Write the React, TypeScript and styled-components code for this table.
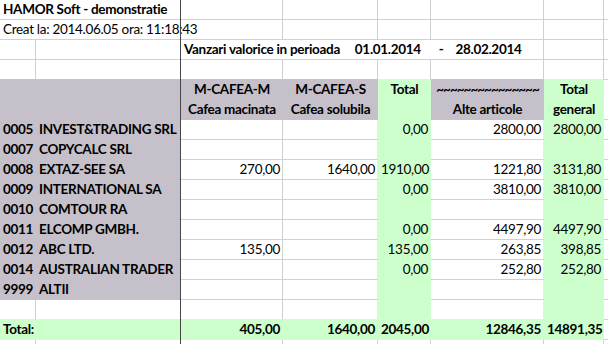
import React from "react";
import styled, { createGlobalStyle } from "styled-components";

const GRID = "#d0d0d0";
const GREEN = "#ccffcc";
const GRAY = "#c5c0c9";
const FREEZE = "#464646";

type Fill = "w" | "g" | "y";
type Align = "left" | "right" | "center";

interface CellDef {
  fill: Fill;
  span?: number;
  text?: string | string[];
  align?: Align;
  bold?: boolean;
}

interface RowDef {
  h: number;
  cells: CellDef[];
}

const fillColor = (f: Fill) => (f === "g" ? GREEN : f === "y" ? GRAY : "#ffffff");

const GlobalStyle = createGlobalStyle`
  html, body {
    margin: 0;
    padding: 0;
    background: #ffffff;
  }
  body {
    font-family: Lato, "Liberation Sans", sans-serif;
    font-size: 13.5px;
    letter-spacing: -0.3px;
    color: #000000;
  }
`;

const Sheet = styled.div`
  position: relative;
  width: 608px;
  height: 344px;
  overflow: hidden;
  display: grid;
  grid-template-columns: 36px 145px 102px 95px 53px 113px 60px 1fr;
  grid-auto-rows: auto;
`;

const FreezeLine = styled.div`
  position: absolute;
  left: 180px;
  top: 0;
  bottom: 0;
  width: 1px;
  background: ${FREEZE};
`;

const Cell = styled.div<{
  $bg: string;
  $right: string;
  $bottom: string;
  $span: number;
  $h: number;
  $align: Align;
  $bold: boolean;
}>`
  grid-column: span ${({ $span }) => $span};
  height: ${({ $h }) => $h - 1}px;
  background: ${({ $bg }) => $bg};
  border-right: 1px solid ${({ $right }) => $right};
  border-bottom: 1px solid ${({ $bottom }) => $bottom};
  padding: 0 2px 0 3px;
  text-align: ${({ $align }) => $align};
  font-weight: ${({ $bold }) => ($bold ? 700 : 400)};
  line-height: 19px;
  white-space: nowrap;
  overflow: hidden;
`;

const HeadLine = styled.div<{ $tilde?: boolean }>`
  height: 19.5px;
  line-height: 19.5px;
  letter-spacing: ${({ $tilde }) => ($tilde ? "-1px" : "-0.3px")};
`;

const w = (text?: string, align: Align = "right", bold = false): CellDef => ({ fill: "w", text, align, bold });
const g = (text?: string, align: Align = "right", bold = false): CellDef => ({ fill: "g", text, align, bold });

const dataRow = (code: string, name: string, c?: string, d?: string, e?: string, f?: string, gen?: string): RowDef => ({
  h: 20,
  cells: [
    { fill: "y", text: code, align: "left", bold: true },
    { fill: "y", text: name, align: "left", bold: true },
    w(c),
    w(d),
    g(e),
    w(f),
    g(gen),
    w(),
  ],
});

const blank = (): RowDef => ({ h: 20, cells: [w(), w(), w(), w(), w(), w(), w(), w()] });

const rows: RowDef[] = [
  {
    h: 20,
    cells: [{ fill: "w", span: 2, text: "HAMOR Soft - demonstratie", align: "left", bold: true }, w(), w(), w(), w(), w(), w()],
  },
  {
    h: 20,
    cells: [{ fill: "w", span: 3, text: "Creat la: 2014.06.05 ora: 11:18:43", align: "left" }, w(), w(), w(), w(), w()],
  },
  {
    h: 20,
    cells: [
      w(),
      w(),
      {
        fill: "w",
        span: 4,
        text: "Vanzari valorice in perioada \u00a0\u00a0\u00a0\u00a001.01.2014 \u00a0\u00a0\u00a0\u00a0\u00a0-\u00a0\u00a0\u00a0 28.02.2014",
        align: "left",
        bold: true,
      },
      w(),
      w(),
    ],
  },
  blank(),
  {
    h: 40,
    cells: [
      { fill: "y", span: 2 },
      { fill: "y", text: ["M-CAFEA-M", "Cafea macinata"], align: "center", bold: true },
      { fill: "y", text: ["M-CAFEA-S", "Cafea solubila"], align: "center", bold: true },
      { fill: "g", text: ["Total", ""], align: "center", bold: true },
      { fill: "y", text: ["~~~~~~~~~~~~~~~", "Alte articole"], align: "center", bold: true },
      { fill: "g", text: ["Total", "general"], align: "center", bold: true },
      w(),
    ],
  },
  dataRow("0005", "INVEST&TRADING SRL", undefined, undefined, "0,00", "2800,00", "2800,00"),
  dataRow("0007", "COPYCALC SRL"),
  dataRow("0008", "EXTAZ-SEE SA", "270,00", "1640,00", "1910,00", "1221,80", "3131,80"),
  dataRow("0009", "INTERNATIONAL SA", undefined, undefined, "0,00", "3810,00", "3810,00"),
  dataRow("0010", "COMTOUR RA"),
  dataRow("0011", "ELCOMP GMBH.", undefined, undefined, "0,00", "4497,90", "4497,90"),
  dataRow("0012", "ABC LTD.", "135,00", undefined, "135,00", "263,85", "398,85"),
  dataRow("0014", "AUSTRALIAN TRADER", undefined, undefined, "0,00", "252,80", "252,80"),
  dataRow("9999", "ALTII"),
  { h: 20, cells: [w(), w(), w(), w(), g(), w(), g(), w()] },
  {
    h: 20,
    cells: [
      { fill: "g", span: 2, text: "Total:", align: "left", bold: true },
      g("405,00", "right", true),
      g("1640,00", "right", true),
      g("2045,00", "right", true),
      g("12846,35", "right", true),
      g("14891,35", "right", true),
      w(),
    ],
  },
  blank(),
];

// fills per column, so a cell can hide the grid line it shares with a filled neighbour
const columnFills = (row?: RowDef): Fill[] => {
  const out: Fill[] = [];
  if (!row) return out;
  row.cells.forEach((c) => {
    for (let i = 0; i < (c.span ?? 1); i++) out.push(c.fill);
  });
  return out;
};

const lineColor = (own: Fill, other?: Fill) => {
  if (own !== "w") return fillColor(own);
  if (other && other !== "w") return fillColor(other);
  return GRID;
};

export default function App() {
  return (
    <>
      <GlobalStyle />
      <Sheet>
        {rows.map((row, ri) => {
          const here = columnFills(row);
          const below = columnFills(rows[ri + 1]);
          let col = 0;
          return row.cells.map((c, ci) => {
            const span = c.span ?? 1;
            const start = col;
            col += span;
            const right = lineColor(c.fill, here[start + span]);
            const bottom = lineColor(c.fill, below[start]);
            return (
              <Cell
                key={`${ri}-${ci}`}
                $bg={fillColor(c.fill)}
                $right={right}
                $bottom={bottom}
                $span={span}
                $h={row.h}
                $align={c.align ?? "left"}
                $bold={!!c.bold}
              >
                {Array.isArray(c.text)
                  ? c.text.map((t, i) => (
                      <HeadLine key={i} $tilde={t.startsWith("~")}>
                        {t}
                      </HeadLine>
                    ))
                  : c.text}
              </Cell>
            );
          });
        })}
        <FreezeLine />
      </Sheet>
    </>
  );
}
